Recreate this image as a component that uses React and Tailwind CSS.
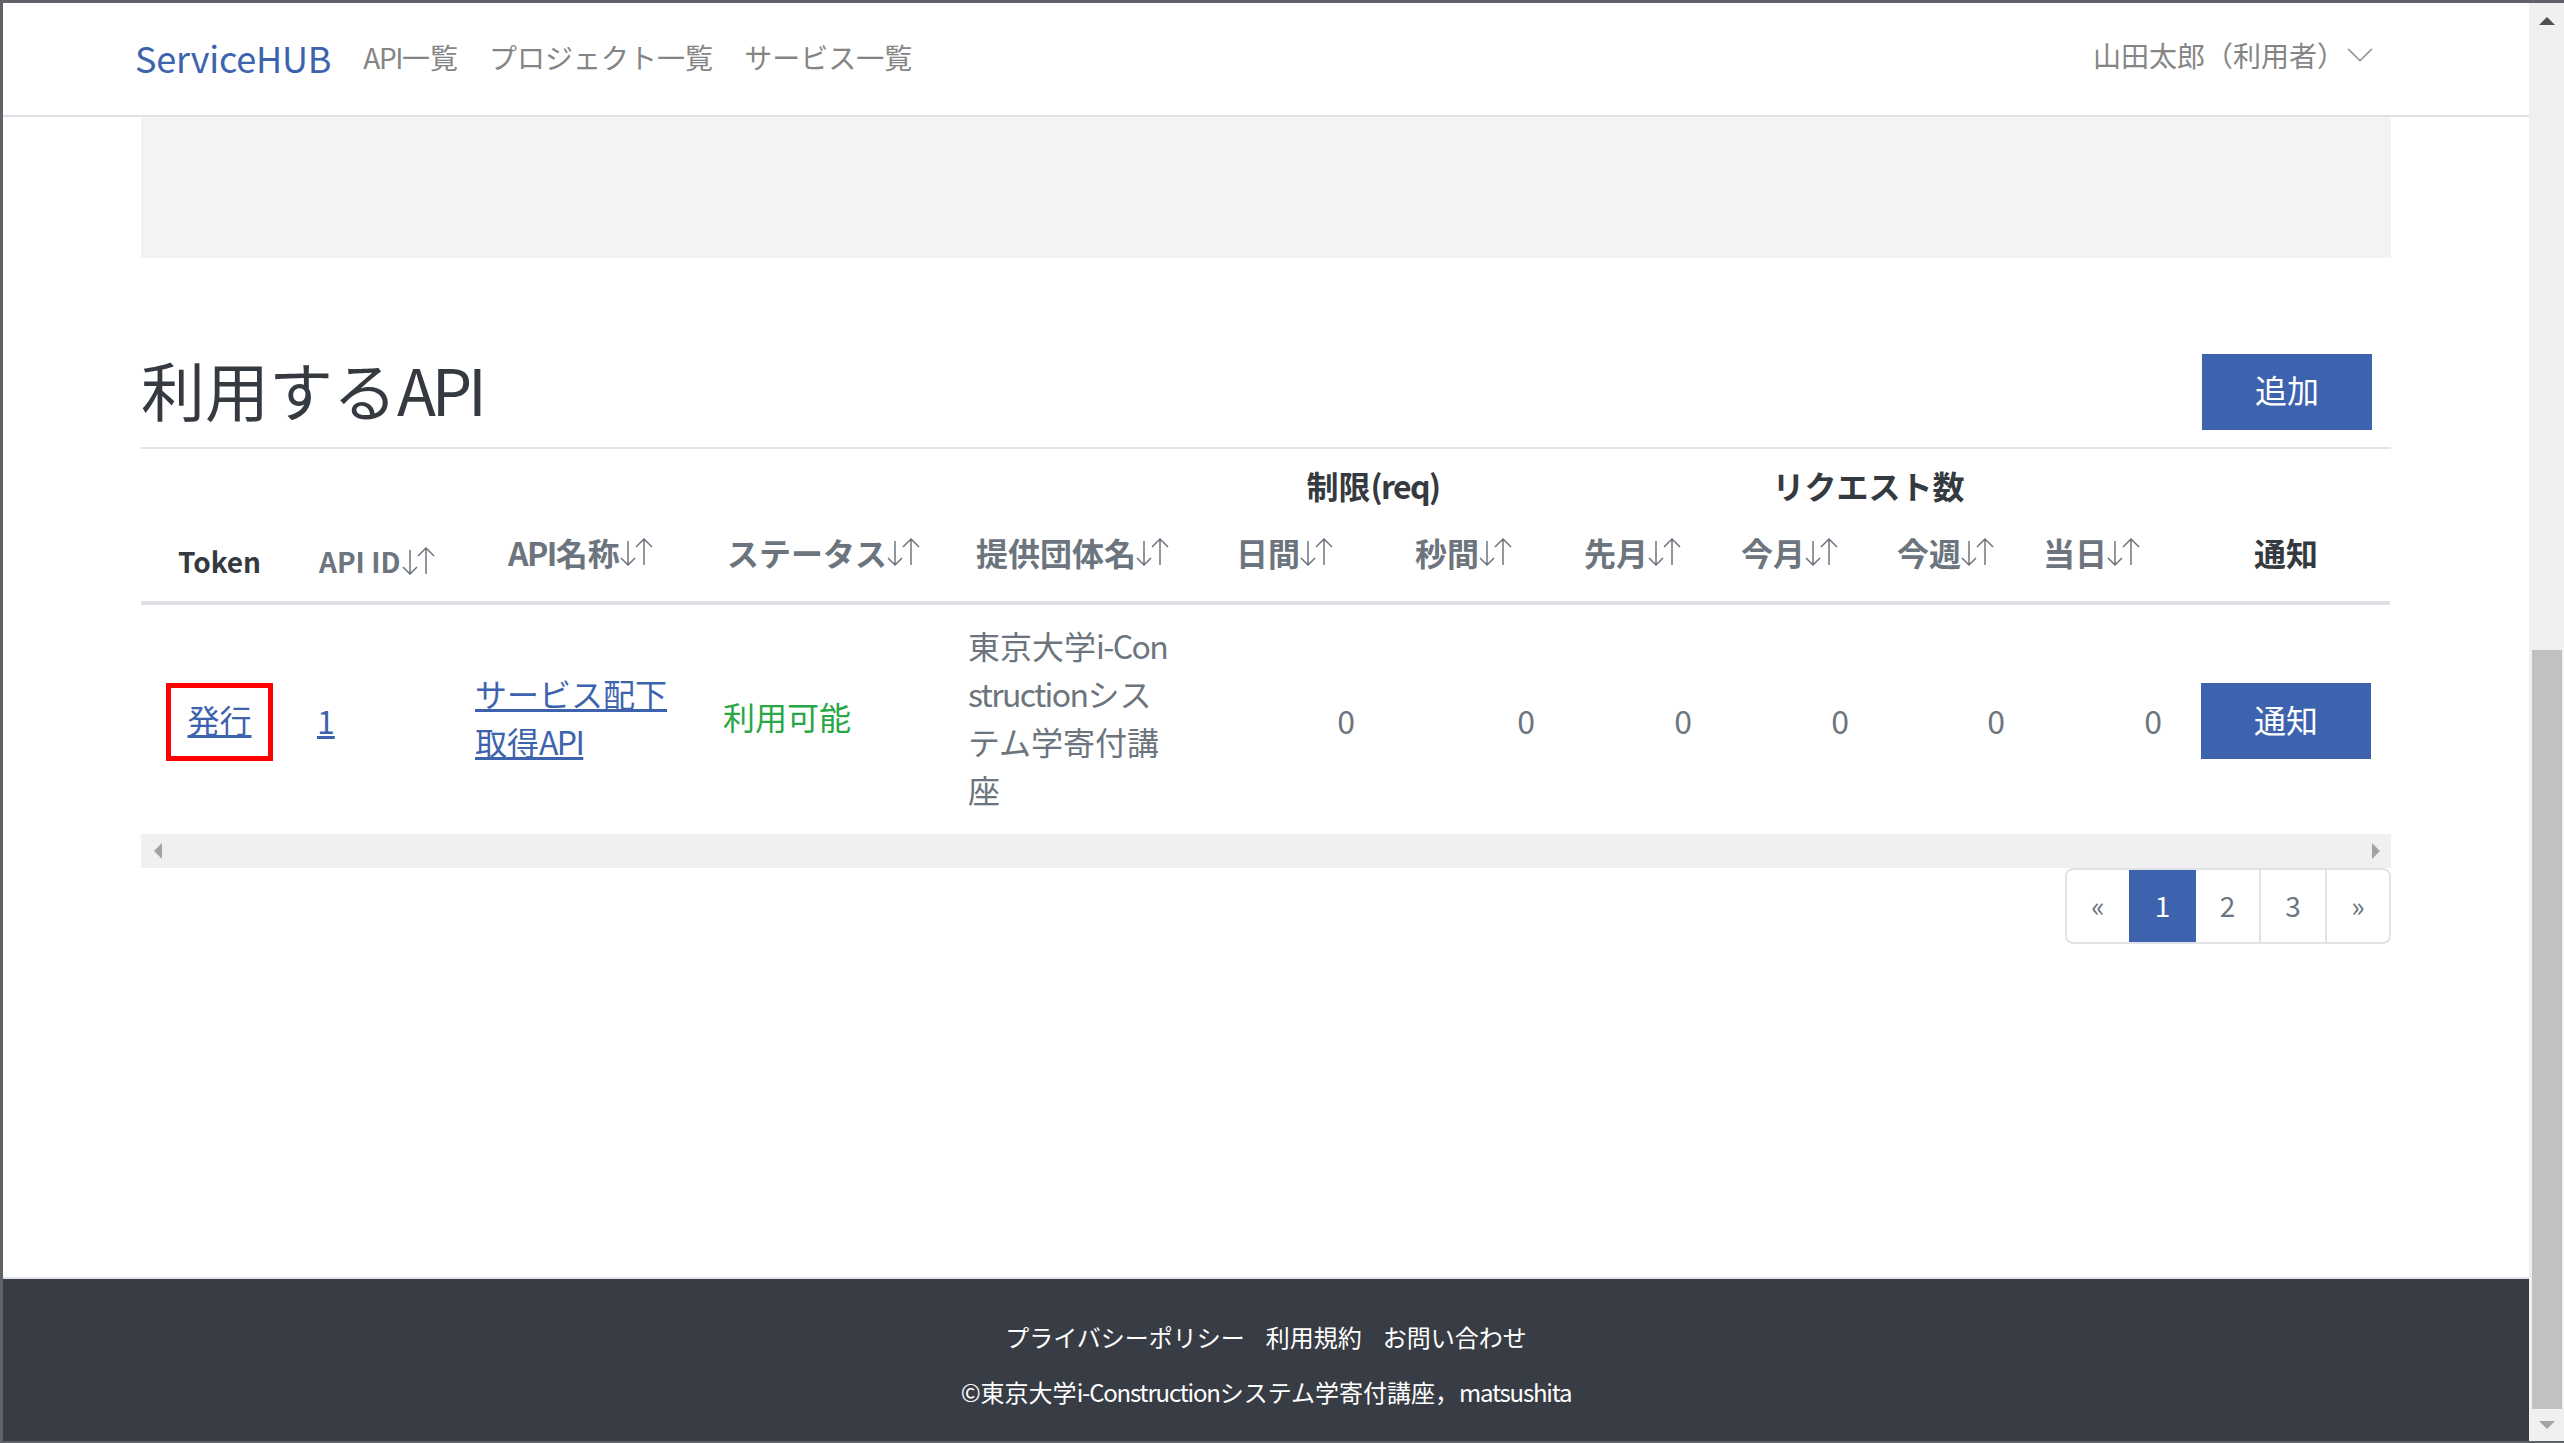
import { ChevronDown } from "lucide-react";

const font = "font-['Noto_Sans_CJK_JP','Noto_Sans',sans-serif]";

// latin runs sit tighter than the default metrics in the reference
const Lat = ({ children }) => <span className="tracking-[-0.05em]">{children}</span>;

const SortArrows = ({ className = "" }) => (
  <svg width="33" height="28" viewBox="0 0 33 28" fill="none" stroke="#6c757d" strokeWidth="1.5" className={`shrink-0 ${className}`}>
    <path d="M8 3V27M1 20L8 27L15 20" />
    <path d="M24 27V1M16 9L24 1L32 9" />
  </svg>
);

// th with sort arrows, pl is the offset of the label in its column
const SortTh = ({ children, pl }) => (
  <th className={`${pl} pb-[25px] align-bottom text-left`}>
    <span className="flex items-center text-[32px] font-bold leading-[48px] text-[#6c757d] whitespace-nowrap">
      {children}
      <SortArrows />
    </span>
  </th>
);

const Triangle = ({ dir, className }) => {
  const paths = {
    up: "M0 8L8 0L16 8Z",
    down: "M0 0L16 0L8 8Z",
    left: "M8 0L8 16L0 8Z",
    right: "M0 0L0 16L8 8Z",
  };
  const small = dir === "up" || dir === "down";
  return (
    <svg width={small ? 16 : 8} height={small ? 8 : 16} viewBox={small ? "0 0 16 8" : "0 0 8 16"} className={className}>
      <path d={paths[dir]} fill="currentColor" />
    </svg>
  );
};

const ZeroCell = () => (
  <td className="pr-[15px] text-right text-[32px] leading-[48px] text-[#6c757d] align-middle">0</td>
);

const PageItem = ({ children, active, className = "" }) => (
  <div
    className={`flex items-center justify-center pb-[2px] text-[28px] ${className} ${
      active ? "bg-[#3d63ae] text-white" : "text-[#6c757d]"
    }`}
  >
    {children}
  </div>
);

export default function App() {
  return (
    <div className={`${font} flex h-[1443px] w-[2564px] flex-col overflow-hidden border-t-[3px] border-b-2 border-l-[3px] border-[#5f6368] bg-white`}>
      <div className="flex min-h-0 flex-1">
        <div className="flex min-w-0 flex-1 flex-col">
          <header className="flex h-[114px] shrink-0 items-center border-b-2 border-[#dee2e6]">
            <a className="mb-[5px] ml-[132px] text-[36px] leading-none tracking-[-0.2px] text-[#3d63ae]">ServiceHUB</a>
            <nav className="mb-[5px] ml-[32px] flex gap-[31px] text-[28px] leading-none text-[#858585]">
              <a><Lat>API</Lat>一覧</a>
              <a>プロジェクト一覧</a>
              <a>サービス一覧</a>
            </nav>
            <div className="mr-[146px] ml-auto flex items-center text-[28px] text-[#858585]">
              <span className="mb-[8px] leading-[28px]">山田太郎（利用者）</span>
              <ChevronDown className="mb-[8px] ml-[-8px] h-[46px] w-[46px]" strokeWidth={0.7} />
            </div>
          </header>

          <main className="flex-1 px-[138px]">
            <div className="h-[141px] bg-[#f3f3f4]" />
            <div className="flex h-[191px] items-end justify-between border-b-2 border-[#e2e2e2] pb-[17px]">
              <h1 className="mb-[-6px] text-[64px] leading-[96px] font-normal text-[#343a40]">
                利用する<span className="tracking-[-0.065em]">API</span>
              </h1>
              <button className="mr-[19px] h-[76px] w-[170px] bg-[#3d63ae] pb-[6px] text-[32px] text-white">追加</button>
            </div>

            <table className="w-[2249px] table-fixed border-collapse">
              <colgroup>
                <col className="w-[162px]" />
                <col className="w-[157px]" />
                <col className="w-[247px]" />
                <col className="w-[246px]" />
                <col className="w-[243px]" />
                <col className="w-[174px]" />
                <col className="w-[180px]" />
                <col className="w-[157px]" />
                <col className="w-[157px]" />
                <col className="w-[156px]" />
                <col className="w-[157px]" />
                <col className="w-[213px]" />
              </colgroup>
              <thead className="border-b-4 border-[#dee2e6]">
                <tr className="h-[74px] text-[32px] font-bold text-[#343a40]">
                  <th colSpan={5} />
                  <th colSpan={2} className="pb-[3px] align-middle text-center">制限<Lat>(req)</Lat></th>
                  <th colSpan={4} className="pb-[3px] pl-[10px] align-middle text-center">リクエスト数</th>
                  <th />
                </tr>
                <tr className="h-[80px]">
                  <th className="pb-[19px] pl-[37px] text-left align-bottom text-[28px] leading-[42px] font-bold text-[#343a40]">Token</th>
                  <th className="pb-[19px] pl-4 align-bottom text-left">
                    <span className="flex items-center text-[28px] leading-[42px] font-bold text-[#6c757d] whitespace-nowrap">
                      API ID
                      <SortArrows className="ml-[2px]" />
                    </span>
                  </th>
                  <SortTh pl="pl-[48px]"><Lat>API</Lat>名称</SortTh>
                  <SortTh pl="pl-[20px]">ステータス</SortTh>
                  <SortTh pl="pl-[23px]">提供団体名</SortTh>
                  <SortTh pl="pl-[40px]">日間</SortTh>
                  <SortTh pl="pl-[45px]">秒間</SortTh>
                  <SortTh pl="pl-[34px]">先月</SortTh>
                  <SortTh pl="pl-[34px]">今月</SortTh>
                  <SortTh pl="pl-[33px]">今週</SortTh>
                  <SortTh pl="pl-[23px]">当日</SortTh>
                  <th className="pb-[25px] pl-[5px] text-center align-bottom text-[32px] leading-[48px] font-bold text-[#343a40]">通知</th>
                </tr>
              </thead>
              <tbody>
                <tr className="h-[231px] text-[32px] leading-[48px]">
                  <td className="align-middle pt-[4px]">
                    <div className="ml-[25px] flex h-[78px] w-[107px] items-center justify-center border-[5px] border-[#ff0000] pb-[6px]">
                      <a className="text-[#3d63ae] underline">発行</a>
                    </div>
                  </td>
                  <td className="pl-[14px] align-middle">
                    <a className="text-[#3d63ae] underline">1</a>
                  </td>
                  <td className="pb-[5px] pl-[15px] align-middle">
                    <a className="text-[#3d63ae] underline">
                      サービス配下
                      <br />
                      取得<Lat>API</Lat>
                    </a>
                  </td>
                  <td className="pb-[7px] pl-4 align-middle text-[#28a745]">利用可能</td>
                  <td className="pb-[5px] pl-[15px] align-middle text-[#6c757d]">
                    東京大学<Lat>i-Con</Lat>
                    <br />
                    <Lat>struction</Lat>シス
                    <br />
                    テム学寄付講
                    <br />
                    座
                  </td>
                  <ZeroCell />
                  <ZeroCell />
                  <ZeroCell />
                  <ZeroCell />
                  <ZeroCell />
                  <ZeroCell />
                  <td className="pt-[3px] align-middle">
                    <button className="ml-[24px] h-[76px] w-[170px] bg-[#3d63ae] pb-[5px] text-[32px] text-white">通知</button>
                  </td>
                </tr>
              </tbody>
            </table>

            <div className="flex h-[34px] items-center justify-between bg-[#f0f0f0] pr-[11px] pl-[13px] text-[#a3a3a3]">
              <Triangle dir="left" />
              <Triangle dir="right" />
            </div>

            <div className="flex justify-end">
              <div className="flex h-[76px] w-[326px] overflow-hidden rounded-lg border-2 border-[#e2e3e8] bg-white">
                <PageItem className="w-[62px]">«</PageItem>
                <PageItem active className="my-[-2px] w-[67px]">1</PageItem>
                <PageItem className="w-[65px] border-r-2 border-[#e2e3e8]">2</PageItem>
                <PageItem className="w-[66px] border-r-2 border-[#e2e3e8]">3</PageItem>
                <PageItem className="flex-1">»</PageItem>
              </div>
            </div>
          </main>

          <footer className="flex h-[164px] shrink-0 flex-col items-center border-t-2 border-[#dee2e6] bg-[#383c44] pt-[40px] text-[24px] leading-[36px] text-white">
            <div className="flex gap-[21px]">
              <a>プライバシーポリシー</a>
              <a>利用規約</a>
              <a>お問い合わせ</a>
            </div>
            <p className="mt-[19px]">©東京大学<Lat>i-Construction</Lat>システム学寄付講座，<Lat>matsushita</Lat></p>
          </footer>
        </div>

        {/* window scrollbar */}
        <div className="flex w-[35px] shrink-0 flex-col items-center bg-[#f0f0f0]">
          <Triangle dir="up" className="mt-[14px] text-[#505050]" />
          <div className="mt-[625px] h-[759px] w-[30px] bg-[#c1c1c1]" />
          <Triangle dir="down" className="mt-[12px] text-[#a3a3a3]" />
        </div>
      </div>
    </div>
  );
}
